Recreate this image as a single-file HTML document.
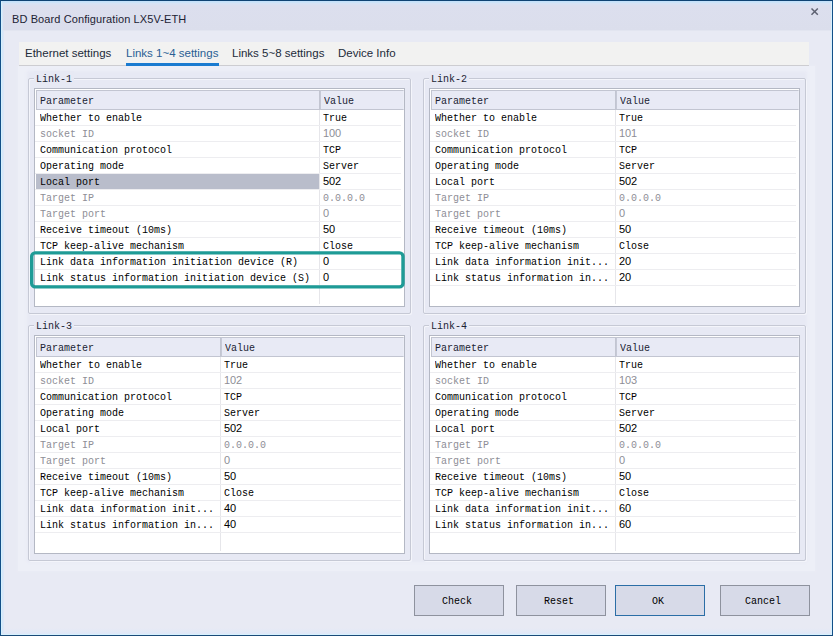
<!DOCTYPE html>
<html><head><meta charset="utf-8"><title>BD Board Configuration LX5V-ETH</title>
<style>
html,body{margin:0;padding:0}
body{width:833px;height:636px;position:relative;overflow:hidden;background:#e8eaf4;font-family:"Liberation Sans",sans-serif;font-size:12px;color:#1b2333}
div,span{box-sizing:border-box}
.abs,.gb,.gbl,.grid,.hdr,.vd,.r,.sel,.btn,.tab{position:absolute}
#win{left:0;top:0;width:833px;height:636px;border:1px solid #135088;border-top-color:#0f4373;border-bottom-color:#1a4a78}
#glow{left:1px;top:1px;width:831px;height:634px;border:1px solid #d6f1fe;border-top-color:#c4e1fa}
#gl{left:2px;top:2px;width:2px;height:632px;background:linear-gradient(90deg,#d4e6f9,#dfe8f6)}
#gt{left:2px;top:2px;width:829px;height:1px;background:#cbe3f8}
#gbm{left:2px;top:628px;width:829px;height:6px;background:linear-gradient(180deg,#e8eaf4,#dfe8f8)}
#title{left:3px;top:3px;width:828px;height:27px;background:linear-gradient(180deg,#d6e4f6 0,#dcdfee 3px,#dbdeec 100%);box-shadow:0 1px 0 #e2e5f0}
#ttext{left:12px;top:13px;font-size:11px;letter-spacing:.1px;color:#1c2233;white-space:nowrap}
#close{left:808px;top:5px;width:14px;height:14px}
#strip{left:19px;top:42px;width:790px;height:23px;background:#f2f2f1;border-bottom:1px solid #cdcdd1;box-sizing:content-box}
#page{left:18px;top:66px;width:797px;height:505px;background:#edeff7;box-shadow:0 0 2px 1px #eaecf5}
#inner{left:29px;top:73px;width:776px;height:487px;background:#e7e9f4;box-shadow:0 0 3px 2px #e7e9f4}
.tab{top:47px;white-space:nowrap;font-size:11.5px;color:#222b3a}
.tab.a{color:#2a5f94}
#ul{left:126px;top:63px;width:93px;height:3px;background:#1a7bd0}
.m{font-family:"Liberation Mono",monospace;font-size:11px;display:inline-block;transform:scaleX(.90909);transform-origin:0 50%;white-space:nowrap}
.gb{width:383px;height:236px;border:1px solid #c6c9d5;border-radius:2px;box-shadow:inset 1px 1px 0 #f4f5fb, 1px 1px 0 #f4f5fb}
.gbl{background:#e7e9f4;height:14px;line-height:14px;width:40px;padding-left:2px;color:#1b2333}
.grid{width:369px;height:217px;border:1px solid #b4b8c4;background:#fff;overflow:hidden;box-sizing:content-box}
.hdr{top:1px;height:20px;line-height:18px;background:#e8eaf5;border:1px solid #c2c5d1;padding-left:3px}
.hdr.h2{border-left-color:#c6c9d6;border-right-color:#eceef7}
.vd{top:21px;width:1px;bottom:2px;background:#e6e6ea}
.r{left:0;right:3px;height:16px;border-bottom:1px solid #ededf0;color:#000}
.r.d{color:#8e8e96}
.r .m,.r .n{position:absolute;top:1px;line-height:15px}
.r .n{top:0}
.n{font-family:"Liberation Sans",sans-serif;font-size:11px;letter-spacing:-.12px;white-space:nowrap}
.r .p{left:5px}
.sel{left:1px;top:0;height:15px;background:#b9bdcb}
.btn{top:585px;height:31px;width:90px;border:1px solid #8e929e;background:#d7dae8;line-height:29px;color:#000}
.btn .m{position:absolute;top:1px}
#hl{left:0;top:0;width:833px;height:636px}
</style></head><body>
<div id="win" class="abs"></div>
<div id="glow" class="abs"></div>
<div id="gbm" class="abs"></div>
<div id="gl" class="abs"></div>
<div id="gt" class="abs"></div>
<div id="title" class="abs"></div>
<div id="ttext" class="abs">BD Board Configuration LX5V-ETH</div>
<svg id="close" class="abs" viewBox="0 0 14 14"><path d="M3.5 3.5 L9.8 9.8 M9.8 3.5 L3.5 9.8" stroke="#5e6272" stroke-width="1.5" fill="none"/></svg>
<div id="page" class="abs"></div>
<div id="inner" class="abs"></div>
<div id="strip" class="abs"></div>
<div class="tab" style="left:25px">Ethernet settings</div>
<div class="tab a" style="left:126px">Links 1~4 settings</div>
<div class="tab" style="left:232px">Links 5~8 settings</div>
<div class="tab" style="left:338px">Device Info</div>
<div id="ul" class="abs"></div>
<div class="gb" style="left:28px;top:78px"></div>
<div class="gbl" style="left:34px;top:71px"><span class="m">Link-1</span></div>
<div class="grid" style="left:34px;top:88px">
<div class="hdr" style="left:1px;width:284px"><span class="m">Parameter</span></div>
<div class="hdr h2" style="left:285px;width:84px"><span class="m">Value</span></div>
<div class="vd" style="left:284px"></div>
<div class="r" style="top:21px"><span class="m p">Whether to enable</span><span class="m v" style="left:288px">True</span></div>
<div class="r d" style="top:37px"><span class="m p">socket ID</span><span class="n v" style="left:288px">100</span></div>
<div class="r" style="top:53px"><span class="m p">Communication protocol</span><span class="m v" style="left:288px">TCP</span></div>
<div class="r" style="top:69px"><span class="m p">Operating mode</span><span class="m v" style="left:288px">Server</span></div>
<div class="r" style="top:85px"><div class="sel" style="width:283px"></div><span class="m p">Local port</span><span class="n v" style="left:288px">502</span></div>
<div class="r d" style="top:101px"><span class="m p">Target IP</span><span class="m v" style="left:288px">0.0.0.0</span></div>
<div class="r d" style="top:117px"><span class="m p">Target port</span><span class="n v" style="left:288px">0</span></div>
<div class="r" style="top:133px"><span class="m p">Receive timeout (10ms)</span><span class="n v" style="left:288px">50</span></div>
<div class="r" style="top:149px"><span class="m p">TCP keep-alive mechanism</span><span class="m v" style="left:288px">Close</span></div>
<div class="r" style="top:165px"><span class="m p">Link data information initiation device (R)</span><span class="n v" style="left:288px">0</span></div>
<div class="r" style="top:181px"><span class="m p">Link status information initiation device (S)</span><span class="n v" style="left:288px">0</span></div>
</div>
<div class="gb" style="left:423px;top:78px"></div>
<div class="gbl" style="left:429px;top:71px"><span class="m">Link-2</span></div>
<div class="grid" style="left:429px;top:88px">
<div class="hdr" style="left:1px;width:185px"><span class="m">Parameter</span></div>
<div class="hdr h2" style="left:186px;width:183px"><span class="m">Value</span></div>
<div class="vd" style="left:185px"></div>
<div class="r" style="top:21px"><span class="m p">Whether to enable</span><span class="m v" style="left:189px">True</span></div>
<div class="r d" style="top:37px"><span class="m p">socket ID</span><span class="n v" style="left:189px">101</span></div>
<div class="r" style="top:53px"><span class="m p">Communication protocol</span><span class="m v" style="left:189px">TCP</span></div>
<div class="r" style="top:69px"><span class="m p">Operating mode</span><span class="m v" style="left:189px">Server</span></div>
<div class="r" style="top:85px"><span class="m p">Local port</span><span class="n v" style="left:189px">502</span></div>
<div class="r d" style="top:101px"><span class="m p">Target IP</span><span class="m v" style="left:189px">0.0.0.0</span></div>
<div class="r d" style="top:117px"><span class="m p">Target port</span><span class="n v" style="left:189px">0</span></div>
<div class="r" style="top:133px"><span class="m p">Receive timeout (10ms)</span><span class="n v" style="left:189px">50</span></div>
<div class="r" style="top:149px"><span class="m p">TCP keep-alive mechanism</span><span class="m v" style="left:189px">Close</span></div>
<div class="r" style="top:165px"><span class="m p">Link data information init...</span><span class="n v" style="left:189px">20</span></div>
<div class="r" style="top:181px"><span class="m p">Link status information in...</span><span class="n v" style="left:189px">20</span></div>
</div>
<div class="gb" style="left:28px;top:325px"></div>
<div class="gbl" style="left:34px;top:318px"><span class="m">Link-3</span></div>
<div class="grid" style="left:34px;top:335px">
<div class="hdr" style="left:1px;width:185px"><span class="m">Parameter</span></div>
<div class="hdr h2" style="left:186px;width:183px"><span class="m">Value</span></div>
<div class="vd" style="left:185px"></div>
<div class="r" style="top:21px"><span class="m p">Whether to enable</span><span class="m v" style="left:189px">True</span></div>
<div class="r d" style="top:37px"><span class="m p">socket ID</span><span class="n v" style="left:189px">102</span></div>
<div class="r" style="top:53px"><span class="m p">Communication protocol</span><span class="m v" style="left:189px">TCP</span></div>
<div class="r" style="top:69px"><span class="m p">Operating mode</span><span class="m v" style="left:189px">Server</span></div>
<div class="r" style="top:85px"><span class="m p">Local port</span><span class="n v" style="left:189px">502</span></div>
<div class="r d" style="top:101px"><span class="m p">Target IP</span><span class="m v" style="left:189px">0.0.0.0</span></div>
<div class="r d" style="top:117px"><span class="m p">Target port</span><span class="n v" style="left:189px">0</span></div>
<div class="r" style="top:133px"><span class="m p">Receive timeout (10ms)</span><span class="n v" style="left:189px">50</span></div>
<div class="r" style="top:149px"><span class="m p">TCP keep-alive mechanism</span><span class="m v" style="left:189px">Close</span></div>
<div class="r" style="top:165px"><span class="m p">Link data information init...</span><span class="n v" style="left:189px">40</span></div>
<div class="r" style="top:181px"><span class="m p">Link status information in...</span><span class="n v" style="left:189px">40</span></div>
</div>
<div class="gb" style="left:423px;top:325px"></div>
<div class="gbl" style="left:429px;top:318px"><span class="m">Link-4</span></div>
<div class="grid" style="left:429px;top:335px">
<div class="hdr" style="left:1px;width:185px"><span class="m">Parameter</span></div>
<div class="hdr h2" style="left:186px;width:183px"><span class="m">Value</span></div>
<div class="vd" style="left:185px"></div>
<div class="r" style="top:21px"><span class="m p">Whether to enable</span><span class="m v" style="left:189px">True</span></div>
<div class="r d" style="top:37px"><span class="m p">socket ID</span><span class="n v" style="left:189px">103</span></div>
<div class="r" style="top:53px"><span class="m p">Communication protocol</span><span class="m v" style="left:189px">TCP</span></div>
<div class="r" style="top:69px"><span class="m p">Operating mode</span><span class="m v" style="left:189px">Server</span></div>
<div class="r" style="top:85px"><span class="m p">Local port</span><span class="n v" style="left:189px">502</span></div>
<div class="r d" style="top:101px"><span class="m p">Target IP</span><span class="m v" style="left:189px">0.0.0.0</span></div>
<div class="r d" style="top:117px"><span class="m p">Target port</span><span class="n v" style="left:189px">0</span></div>
<div class="r" style="top:133px"><span class="m p">Receive timeout (10ms)</span><span class="n v" style="left:189px">50</span></div>
<div class="r" style="top:149px"><span class="m p">TCP keep-alive mechanism</span><span class="m v" style="left:189px">Close</span></div>
<div class="r" style="top:165px"><span class="m p">Link data information init...</span><span class="n v" style="left:189px">60</span></div>
<div class="r" style="top:181px"><span class="m p">Link status information in...</span><span class="n v" style="left:189px">60</span></div>
</div>
<svg id="hl" class="abs" viewBox="0 0 833 636"><rect x="31.7" y="252.9" width="371.3" height="34" rx="3.5" ry="3.5" fill="none" stroke="#1e9b96" stroke-width="3.4"/></svg>
<div class="btn" style="left:414px"><span class="m" style="left:27px">Check</span></div>
<div class="btn" style="left:516px"><span class="m" style="left:27px">Reset</span></div>
<div class="btn" style="left:615px;border-color:#2b6ea6"><span class="m" style="left:36px">OK</span></div>
<div class="btn" style="left:720px"><span class="m" style="left:24px">Cancel</span></div>
</body></html>
